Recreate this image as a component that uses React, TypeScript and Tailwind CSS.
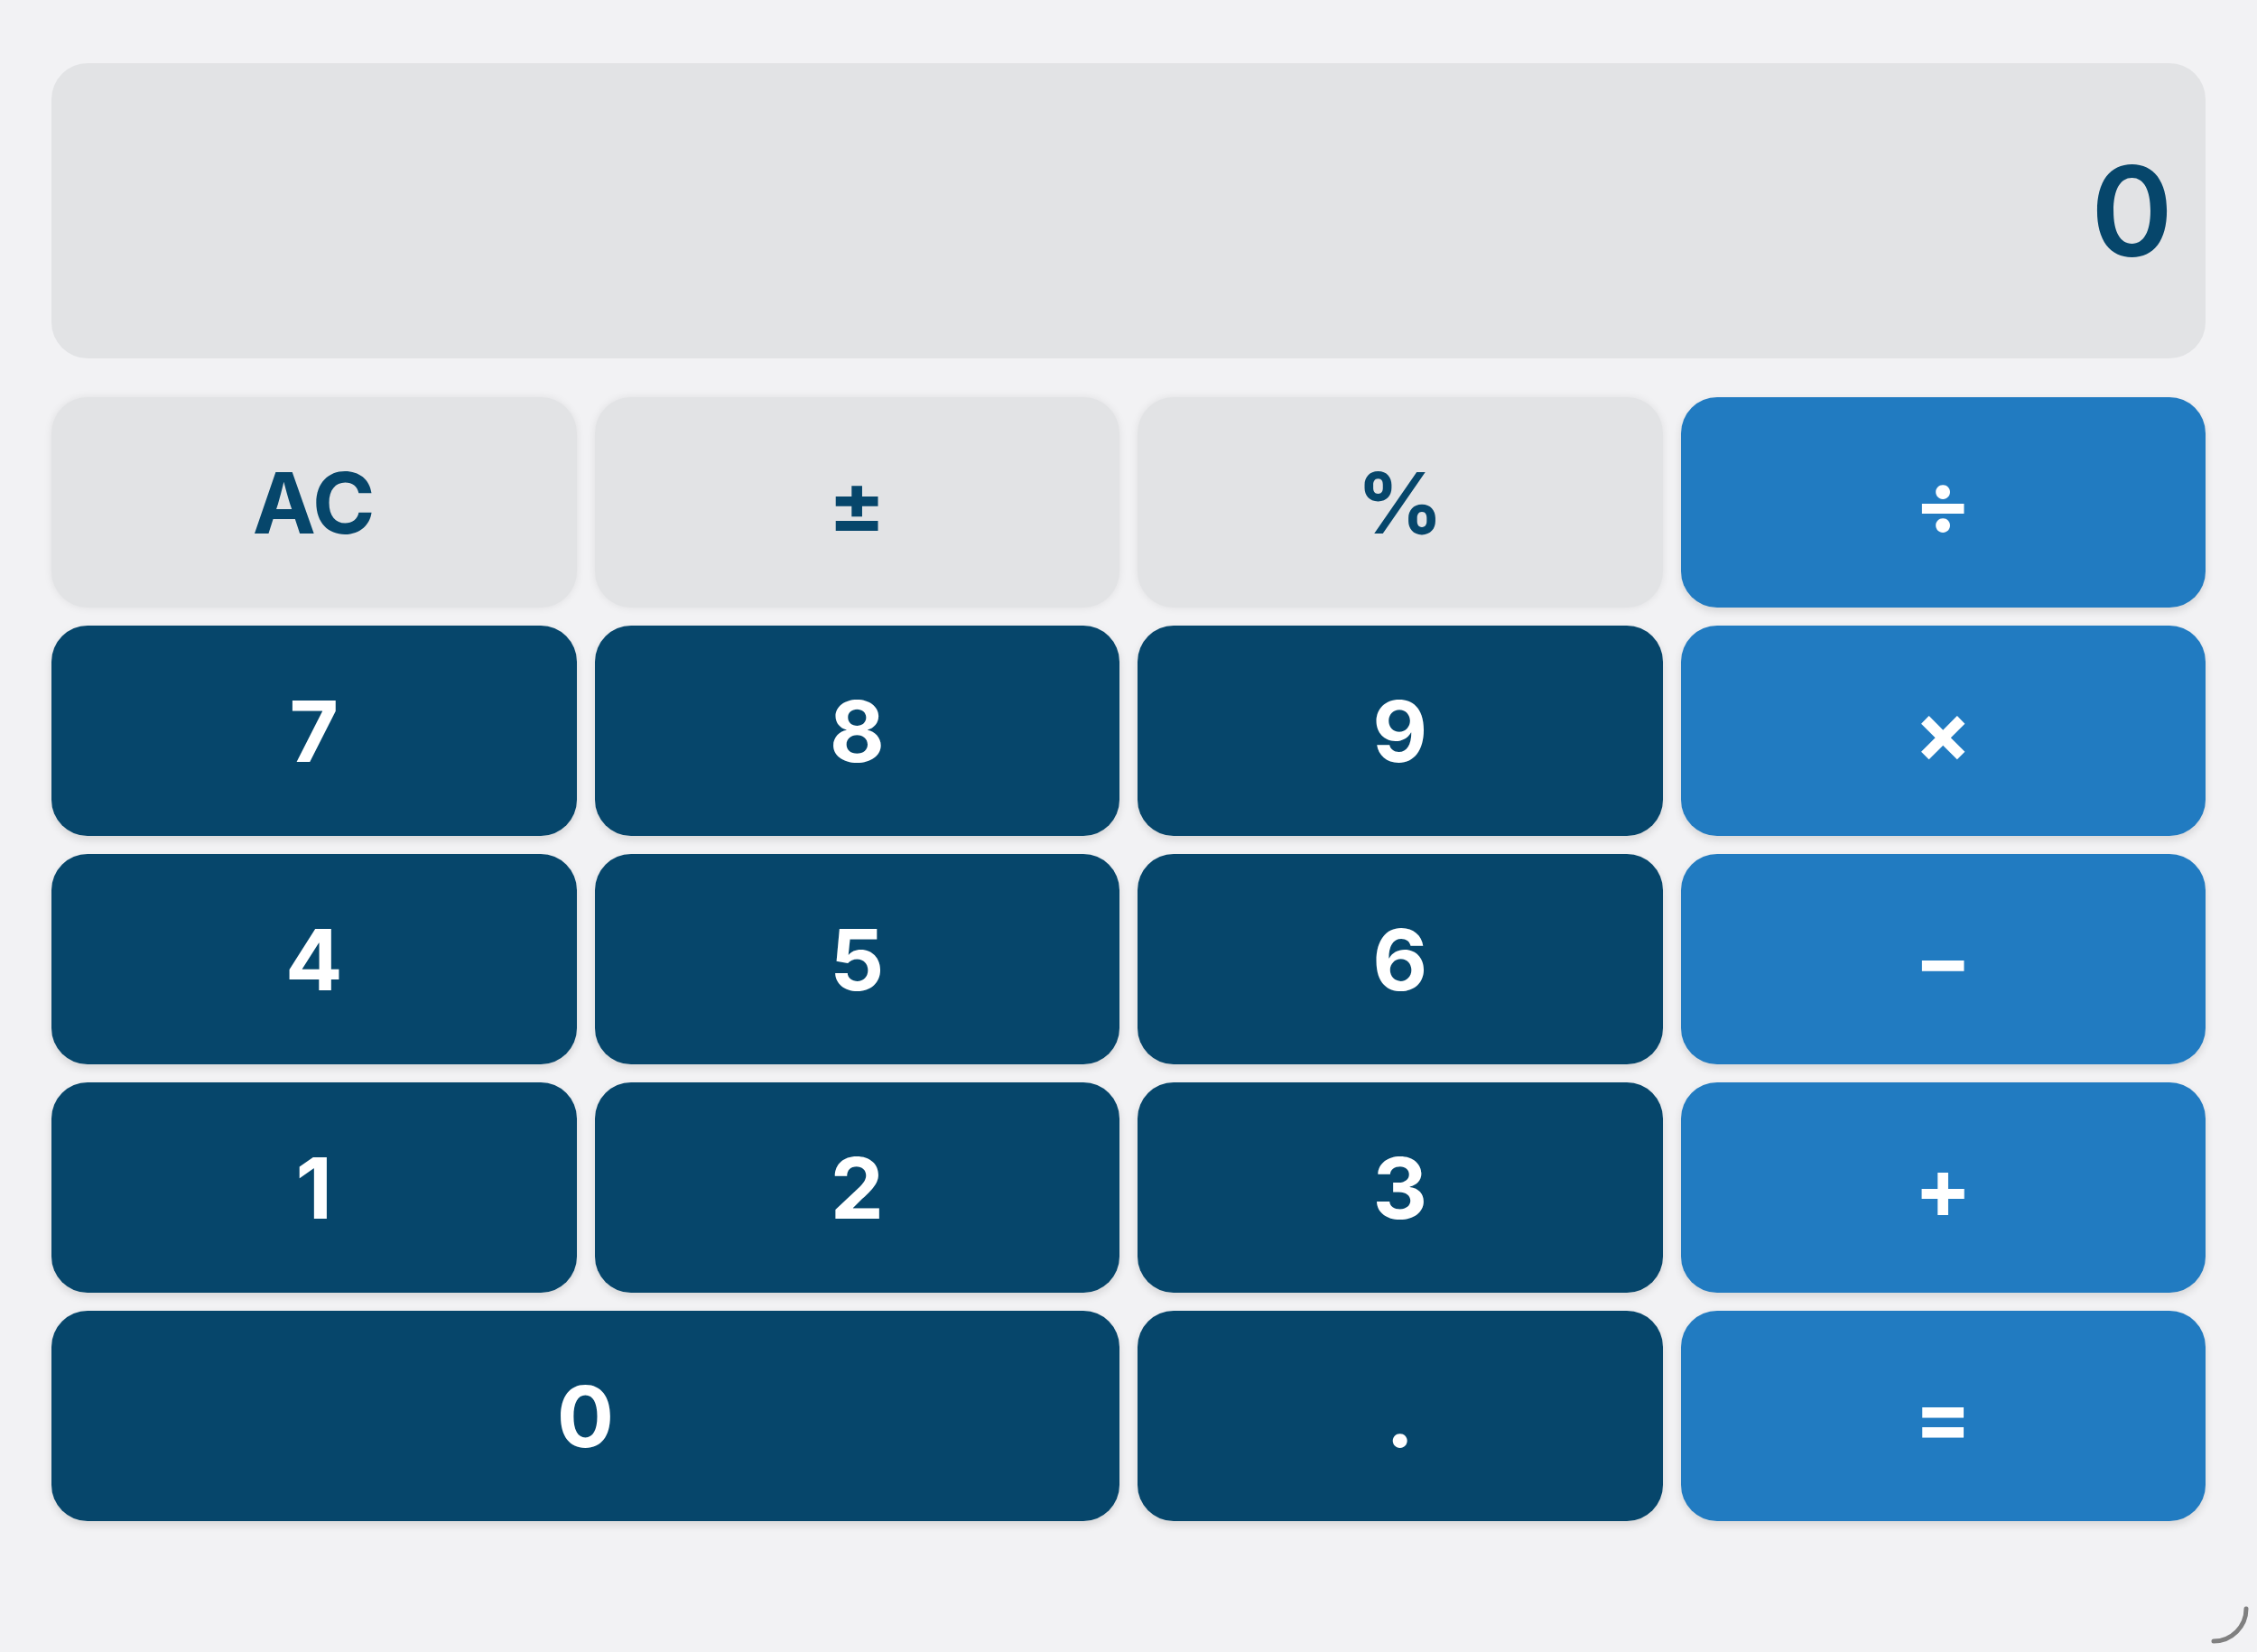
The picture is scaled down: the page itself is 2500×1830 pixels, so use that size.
import {useState} from 'react';

type Kind = 'fn' | 'num' | 'op';

type Key = {label: string; kind: Kind; wide?: boolean};

const KEYS: Key[] = [
	{label: 'AC', kind: 'fn'},
	{label: '±', kind: 'fn'},
	{label: '%', kind: 'fn'},
	{label: '÷', kind: 'op'},
	{label: '7', kind: 'num'},
	{label: '8', kind: 'num'},
	{label: '9', kind: 'num'},
	{label: '×', kind: 'op'},
	{label: '4', kind: 'num'},
	{label: '5', kind: 'num'},
	{label: '6', kind: 'num'},
	{label: '−', kind: 'op'},
	{label: '1', kind: 'num'},
	{label: '2', kind: 'num'},
	{label: '3', kind: 'num'},
	{label: '+', kind: 'op'},
	{label: '0', kind: 'num', wide: true},
	{label: '.', kind: 'num'},
	{label: '=', kind: 'op'},
];

const KIND_CLASS: Record<Kind, string> = {
	fn: 'bg-[#e2e3e5] text-[#06466b] shadow-[0_0_10px_rgba(0,0,0,0.08)]',
	num: 'bg-[#06466b] text-white shadow-[0_4px_10px_rgba(0,0,0,0.12)]',
	op: 'bg-[#217bc1] text-white shadow-[0_4px_10px_rgba(0,0,0,0.12)]',
};

// Busy indicator tucked into the bottom-right corner of the page.
function Spinner() {
	return (
		<svg
			className="absolute bottom-0 right-0 h-[60px] w-[60px]"
			fill="none"
			viewBox="0 0 60 60"
		>
			<path
				d="M48 12 A 36 36 0 0 1 12 48"
				stroke="#808080"
				strokeLinecap="round"
				strokeWidth="5"
			/>
		</svg>
	);
}

export default function App() {
	const [display, setDisplay] = useState('0');

	const press = (label: string) => {
		if (label === 'AC') {
			setDisplay('0');

			return;
		}

		if (/^[0-9]$/.test(label)) {
			setDisplay((current) => (current === '0' ? label : current + label));
		}
	};

	return (
		<div className="relative min-h-screen bg-[#f2f2f4] px-[57px] pt-[70px] font-['Inter',sans-serif]">
			<div className="flex h-[327px] items-center justify-end rounded-[40px] bg-[#e2e3e5] pr-[36px]">
				<span className="text-[138px] font-semibold leading-none text-[#06466b]">
					{display}
				</span>
			</div>

			<div className="mt-[43px] grid grid-cols-4 gap-x-[20px] gap-y-[20px]">
				{KEYS.map((key) => (
					<button
						className={`flex h-[233px] items-center justify-center rounded-[40px] text-[94px] font-bold leading-none ${KIND_CLASS[key.kind]} ${key.wide ? 'col-span-2' : ''}`}
						key={key.label}
						onClick={() => press(key.label)}
					>
						{key.label}
					</button>
				))}
			</div>

			<Spinner />
		</div>
	);
}
